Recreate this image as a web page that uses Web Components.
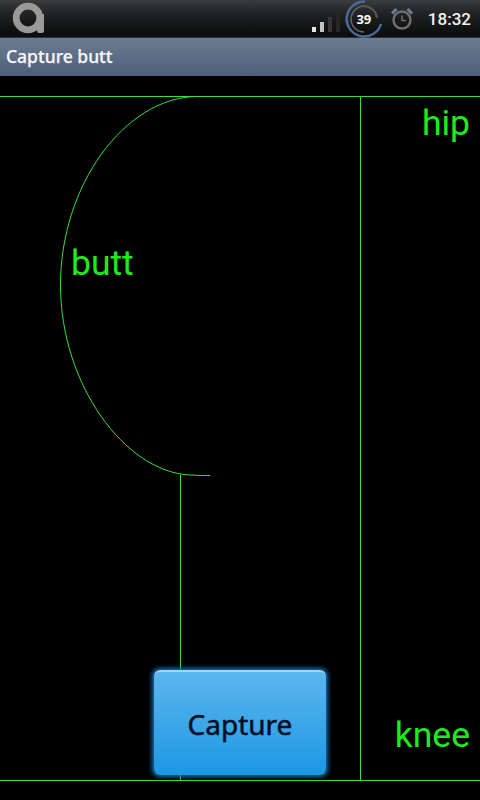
<!DOCTYPE html>
<html><head><meta charset="utf-8">
<style>
html,body{margin:0;padding:0;background:#000;width:480px;height:800px;overflow:hidden}
body{display:flex;flex-direction:column;font-family:"Noto Sans","Open Sans",sans-serif}
</style></head><body>
<status-bar></status-bar>
<title-bar>Capture butt</title-bar>
<capture-canvas>
  <canvas-label style="left:71px;top:165px">butt</canvas-label>
  <canvas-label style="right:10px;top:25px">hip</canvas-label>
  <canvas-label style="right:10px;top:637px">knee</canvas-label>
  <glow-button style="left:154px;top:594px">Capture</glow-button>
</capture-canvas>
<script>
function def(name,html){customElements.define(name,class extends HTMLElement{constructor(){super();this.attachShadow({mode:'open'}).innerHTML=html;}});}
def('status-bar',`<style>
:host{display:flex;align-items:center;justify-content:space-between;height:38px;box-sizing:border-box;flex:none;
background:linear-gradient(#3a3c3e 0,#232527 12px,#131415 26px,#0b0c0c 100%);border-bottom:1px solid #2a3330}
.right{display:flex;align-items:center}
svg{display:block}
.time{color:#f2f2f2;font:500 17px Roboto,sans-serif;margin:0 9px 0 14px}
.sig{margin-right:4px}.clock{margin-left:6px}
.b{position:relative}.n{position:absolute;inset:0;display:flex;align-items:center;justify-content:center;color:#f8f8f8;font:700 13px "Noto Sans",sans-serif}
</style>
<svg width="46" height="38" viewBox="0 0 46 38" style="margin-left:10px"><circle cx="18" cy="18" r="11.800" fill="none" stroke="#999" stroke-width="6.800"/><path d="M27 14H34V31a2 2 0 0 1-2 2H29a2 2 0 0 1-2-2Z" fill="#999"/></svg>
<div class="right">
<svg class="sig" width="28" height="30" viewBox="0 0 28 30"><rect x="0" y="23" width="4" height="5" fill="#e6e6e6"/><rect x="8" y="18" width="4" height="10" fill="#c4c4c4"/><rect x="16" y="13" width="4" height="15" fill="#363636"/><rect x="24" y="7" width="4" height="21" fill="#262626"/></svg>
<div class="b"><svg width="40" height="38" viewBox="0 0 40 38"><path d="M20 6A13.500 13.500 0 0 1 33 18" fill="none" stroke="#555" stroke-width="2"/><path d="M20 6A13.500 13.500 0 0 0 7 19A13 13 0 0 0 20 32" fill="none" stroke="#666" stroke-width="1.500"/><path d="M21 1.500A17.500 17.500 0 1 0 37 24" fill="none" stroke="#4a6a9c" stroke-width="2.500"/></svg><div class="n">39</div></div>
<svg class="clock" width="24" height="26" viewBox="0 0 24 26"><circle cx="12" cy="14" r="8.500" fill="none" stroke="#6e6e6e" stroke-width="2.500"/><path d="M12 9.500V14.500H16" fill="none" stroke="#6e6e6e" stroke-width="1.500"/><path d="M2 7.500 6.500 3M22 7.500 17.500 3" stroke="#6c8098" stroke-width="3"/></svg>
<span class="time">18:32</span>
</div>`);
def('title-bar',`<style>
:host{display:flex;align-items:center;flex:none;height:38px;box-sizing:border-box;padding:0 6px 2px;
background:linear-gradient(#6b7c92,#4d5f78);color:#f6f6f6;font:500 17.500px "Noto Sans",sans-serif;white-space:nowrap;-webkit-text-stroke:.25px #f6f6f6}
</style><slot></slot>`);
def('capture-canvas',`<style>
:host{display:block;position:relative;flex:1;background:#000}
svg{position:absolute;left:0;top:0}
</style>
<svg width="480" height="724" viewBox="0 76 480 724" fill="none" stroke="#3cdc3c" stroke-width="1">
<path d="M0 96.500H480M0 780.500H480M360.500 96.500V780.500M180.500 475V780.500"/>
<path d="M196 96.500C125 98 60.500 185 60.500 285C60.500 384 125 472 190 475C197 475.500 203 475.500 210 475.500"/>
</svg><slot></slot>`);
def('canvas-label',`<style>
:host{display:block;position:absolute;color:#1eea1e;font:400 35.500px/44px Roboto,sans-serif}
</style><slot></slot>`);
def('glow-button',`<style>
:host{display:flex;align-items:center;justify-content:center;position:absolute;width:172px;height:105px;box-sizing:border-box;border-radius:6px;
background:linear-gradient(#5db6ee,#1d97e3);border-top:2px solid #9fd6f6;color:#000f22;font:400 28px "Noto Sans",sans-serif;-webkit-text-stroke:.5px #000f22;box-shadow:0 0 4px 2px #1a6fb0}
</style><slot></slot>`);
</script>
</body></html>
